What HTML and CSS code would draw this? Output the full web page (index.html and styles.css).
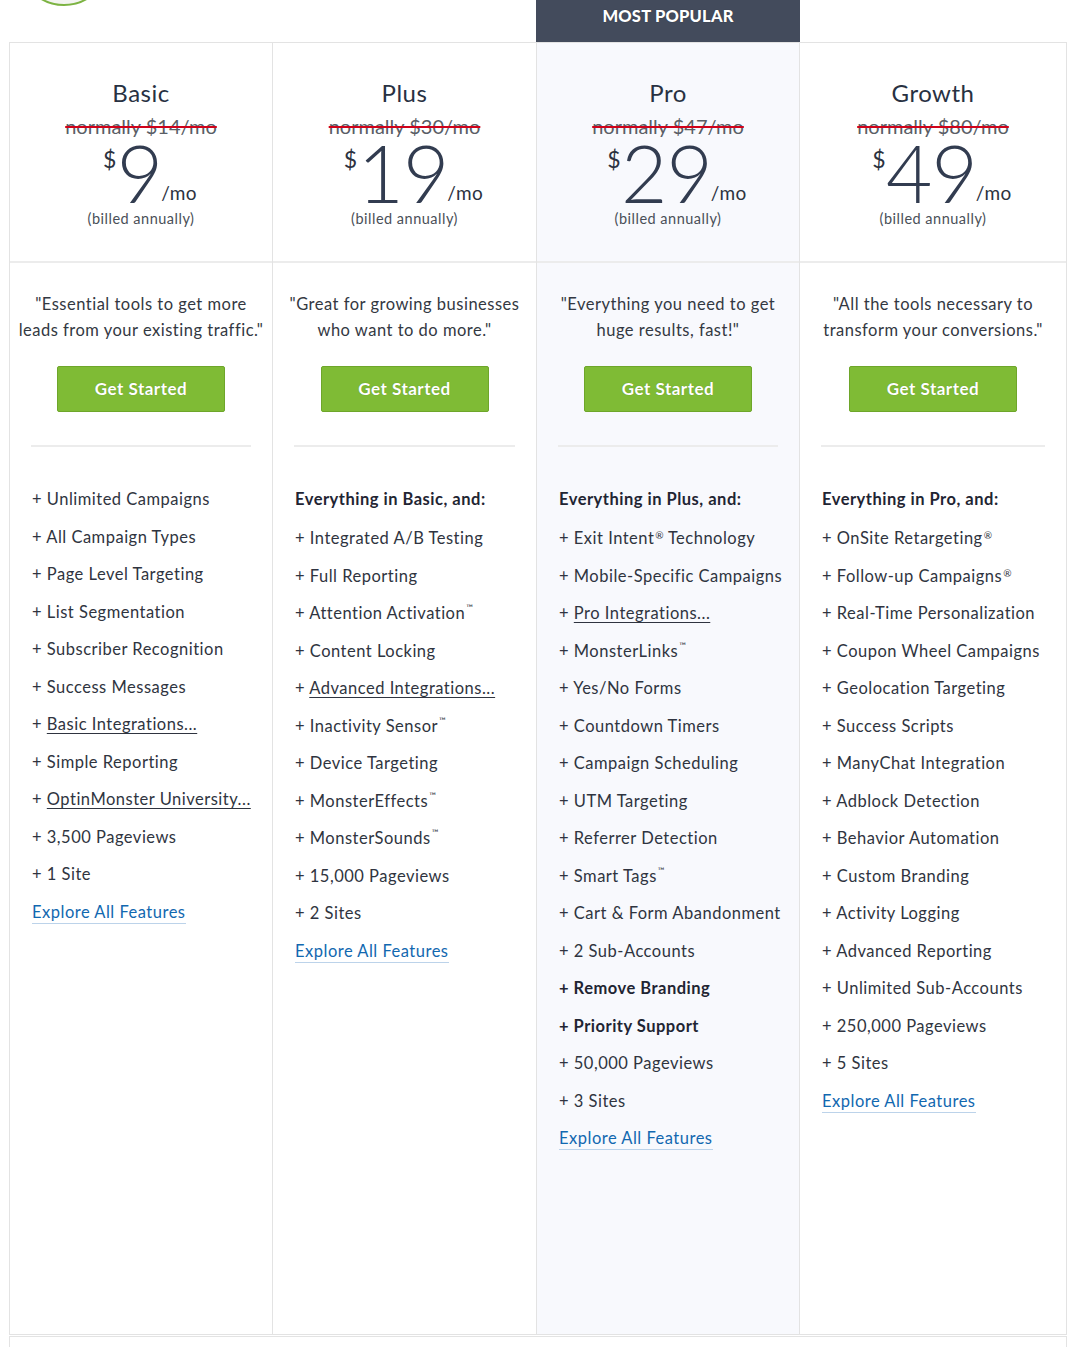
FILE: index.html
```html
<!DOCTYPE html>
<html lang="en">
<head>
<meta charset="utf-8">
<title>Pricing</title>
<link rel="stylesheet" href="styles.css">
</head>
<body>
<div class="page">
  <div class="top">
    <div class="top-cell"><div class="logo-circle"></div></div>
    <div class="top-cell"></div>
    <div class="top-cell"><div class="banner">MOST POPULAR</div></div>
    <div class="top-cell"></div>
  </div>
  <div class="plans">
    <div class="plan">
      <div class="plan-head">
        <div class="plan-name">Basic</div>
        <div class="plan-was">normally $14/mo</div>
        <div class="price"><span class="cur">$</span><span class="amount">9</span><span class="per">/mo</span></div>
        <div class="billed">(billed annually)</div>
      </div>
      <div class="plan-body">
        <p class="quote">"Essential tools to get more<br>leads from your existing traffic."</p>
        <a class="btn" href="#">Get Started</a>
        <div class="divider"></div>
        <ul class="features">
          <li>+ Unlimited Campaigns</li>
          <li>+ All Campaign Types</li>
          <li>+ Page Level Targeting</li>
          <li>+ List Segmentation</li>
          <li>+ Subscriber Recognition</li>
          <li>+ Success Messages</li>
          <li>+ <span class="u">Basic Integrations...</span></li>
          <li>+ Simple Reporting</li>
          <li>+ <span class="u">OptinMonster University...</span></li>
          <li>+ 3,500 Pageviews</li>
          <li>+ 1 Site</li>
          <li><a class="explore" href="#">Explore All Features</a></li>
        </ul>
      </div>
    </div>
    <div class="plan">
      <div class="plan-head">
        <div class="plan-name">Plus</div>
        <div class="plan-was">normally $30/mo</div>
        <div class="price"><span class="cur">$</span><span class="amount">19</span><span class="per">/mo</span></div>
        <div class="billed">(billed annually)</div>
      </div>
      <div class="plan-body">
        <p class="quote">"Great for growing businesses<br>who want to do more."</p>
        <a class="btn" href="#">Get Started</a>
        <div class="divider"></div>
        <ul class="features">
          <li class="lead">Everything in Basic, and:</li>
          <li>+ Integrated A/B Testing</li>
          <li>+ Full Reporting</li>
          <li>+ Attention Activation<sup class="tm">™</sup></li>
          <li>+ Content Locking</li>
          <li>+ <span class="u">Advanced Integrations...</span></li>
          <li>+ Inactivity Sensor<sup class="tm">™</sup></li>
          <li>+ Device Targeting</li>
          <li>+ MonsterEffects<sup class="tm">™</sup></li>
          <li>+ MonsterSounds<sup class="tm">™</sup></li>
          <li>+ 15,000 Pageviews</li>
          <li>+ 2 Sites</li>
          <li><a class="explore" href="#">Explore All Features</a></li>
        </ul>
      </div>
    </div>
    <div class="plan plan-popular">
      <div class="plan-head">
        <div class="plan-name">Pro</div>
        <div class="plan-was">normally $47/mo</div>
        <div class="price"><span class="cur">$</span><span class="amount">29</span><span class="per">/mo</span></div>
        <div class="billed">(billed annually)</div>
      </div>
      <div class="plan-body">
        <p class="quote">"Everything you need to get<br>huge results, fast!"</p>
        <a class="btn" href="#">Get Started</a>
        <div class="divider"></div>
        <ul class="features">
          <li class="lead">Everything in Plus, and:</li>
          <li>+ Exit Intent<sup class="reg">®</sup> Technology</li>
          <li>+ Mobile-Specific Campaigns</li>
          <li>+ <span class="u">Pro Integrations...</span></li>
          <li>+ MonsterLinks<sup class="tm">™</sup></li>
          <li>+ Yes/No Forms</li>
          <li>+ Countdown Timers</li>
          <li>+ Campaign Scheduling</li>
          <li>+ UTM Targeting</li>
          <li>+ Referrer Detection</li>
          <li>+ Smart Tags<sup class="tm">™</sup></li>
          <li>+ Cart &amp; Form Abandonment</li>
          <li>+ 2 Sub-Accounts</li>
          <li class="strong">+ Remove Branding</li>
          <li class="strong">+ Priority Support</li>
          <li>+ 50,000 Pageviews</li>
          <li>+ 3 Sites</li>
          <li><a class="explore" href="#">Explore All Features</a></li>
        </ul>
      </div>
    </div>
    <div class="plan">
      <div class="plan-head">
        <div class="plan-name">Growth</div>
        <div class="plan-was">normally $80/mo</div>
        <div class="price"><span class="cur">$</span><span class="amount">49</span><span class="per">/mo</span></div>
        <div class="billed">(billed annually)</div>
      </div>
      <div class="plan-body">
        <p class="quote">"All the tools necessary to<br>transform your conversions."</p>
        <a class="btn" href="#">Get Started</a>
        <div class="divider"></div>
        <ul class="features">
          <li class="lead">Everything in Pro, and:</li>
          <li>+ OnSite Retargeting<sup class="reg">®</sup></li>
          <li>+ Follow-up Campaigns<sup class="reg">®</sup></li>
          <li>+ Real-Time Personalization</li>
          <li>+ Coupon Wheel Campaigns</li>
          <li>+ Geolocation Targeting</li>
          <li>+ Success Scripts</li>
          <li>+ ManyChat Integration</li>
          <li>+ Adblock Detection</li>
          <li>+ Behavior Automation</li>
          <li>+ Custom Branding</li>
          <li>+ Activity Logging</li>
          <li>+ Advanced Reporting</li>
          <li>+ Unlimited Sub-Accounts</li>
          <li>+ 250,000 Pageviews</li>
          <li>+ 5 Sites</li>
          <li><a class="explore" href="#">Explore All Features</a></li>
        </ul>
      </div>
    </div>
  </div>
  <div class="after"></div>
</div>
</body>
</html>
```

FILE: styles.css
```css
* { box-sizing: border-box; }

html, body {
  margin: 0;
  padding: 0;
  background: #ffffff;
}

body {
  font-family: "Lato", "Open Sans", "Liberation Sans", sans-serif;
  color: #2c3240;
  letter-spacing: 0.5px;
  overflow: hidden;
}

.page {
  width: 1058px;
  margin-left: 9px;
}

.top {
  display: grid;
  grid-template-columns: 263px 264px 263px 1fr;
  height: 42px;
  padding-left: 1px;
}

.top-cell {
  min-width: 0;
}

.logo-circle {
  width: 92px;
  height: 92px;
  border-radius: 50%;
  background: #f3f4f1;
  border: 2px solid #7cb342;
  margin-top: -86px;
  margin-left: 8px;
}

.banner {
  height: 42px;
  margin-left: -1px;
  background: #434b5c;
  color: #ffffff;
  font-weight: 900;
  font-size: 16.5px;
  letter-spacing: 0.2px;
  text-align: center;
  line-height: 33px;
  text-shadow: 0 0 1px rgba(0,0,0,0.4);
}

.plans {
  display: grid;
  grid-template-columns: 263px 264px 263px 1fr;
  border-left: 1px solid #e3e3e3;
  border-top: 1px solid #e3e3e3;
  min-height: 1293px;
}

.plan {
  border-right: 1px solid #e3e3e3;
  border-bottom: 1px solid #e3e3e3;
  display: flex;
  flex-direction: column;
  min-width: 0;
}

.plan-popular {
  background: #f8f9fd;
}

.plan-head {
  border-bottom: 2px solid #ececec;
  text-align: center;
  padding: 35px 0 32px;
}

.plan-name {
  font-size: 24px;
  line-height: 30px;
  color: #283142;
}

.plan-was {
  margin-top: 3px;
  font-size: 20px;
  line-height: 30px;
  letter-spacing: 0;
  color: #5a5e66;
  text-decoration: line-through;
  text-decoration-color: #d0021b;
  text-decoration-thickness: 2px;
}

.price {
  margin-top: 1px;
  padding-left: 18px;
  display: flex;
  justify-content: center;
  align-items: flex-start;
  height: 60px;
  color: #323c50;
}

.cur {
  font-size: 23px;
  line-height: 22px;
  margin-top: 6px;
  margin-right: 0;
  color: #2c3240;
}

.amount {
  font-size: 80px;
  line-height: 60px;
  font-weight: 300;
  letter-spacing: -1px;
  height: 60px;
}

.per {
  align-self: flex-end;
  font-size: 19px;
  line-height: 18px;
  margin-left: -1px;
  margin-bottom: 0;
  color: #2c3240;
}

.billed {
  margin-top: 7px;
  font-size: 14.5px;
  line-height: 20px;
  color: #4a4f58;
}

.plan-body {
  padding: 28px 0 0;
  display: flex;
  flex-direction: column;
  align-items: center;
}

.quote {
  margin: 0;
  padding: 0 4px;
  font-size: 16.5px;
  line-height: 26px;
  text-align: center;
  white-space: nowrap;
  color: #333842;
}

.btn {
  margin-top: 23px;
  width: 168px;
  height: 46px;
  background: #7fbb35;
  border: 1px solid #6ea62a;
  border-radius: 2px;
  color: #ffffff;
  font-weight: 700;
  font-size: 17px;
  line-height: 44px;
  text-align: center;
  text-decoration: none;
  text-shadow: 0 0 1px rgba(0,0,0,0.25);
}

.divider {
  margin-top: 33px;
  align-self: stretch;
  margin-left: 21px;
  margin-right: 21px;
  height: 2px;
  background: #ececec;
}

.features {
  align-self: stretch;
  list-style: none;
  margin: 40px 0 0;
  padding: 0 4px 0 22px;
  font-size: 16.5px;
  color: #2f3440;
}

.features li {
  line-height: 24px;
  margin-bottom: 13.5px;
  white-space: nowrap;
}

.features li.lead {
  font-weight: 700;
  color: #1f2533;
  margin-bottom: 15px;
}

.features li.strong {
  font-weight: 700;
  color: #1f2533;
}

.u {
  text-decoration: underline;
  text-underline-offset: 3px;
}

sup.tm {
  font-size: 9px;
  vertical-align: top;
  line-height: 14px;
  margin-left: 1px;
  letter-spacing: 0;
}

sup.reg {
  font-size: 10px;
  vertical-align: top;
  line-height: 18px;
  margin-left: 1px;
  letter-spacing: 0;
}

.explore {
  color: #1268b0;
  text-decoration: none;
  border-bottom: 1px solid #bcd3ea;
  padding-bottom: 1px;
}

.after {
  height: 30px;
  border-left: 1px solid #e3e3e3;
  border-right: 1px solid #e3e3e3;
  border-top: 1px solid #e3e3e3;
  margin-top: 1px;
}
```
